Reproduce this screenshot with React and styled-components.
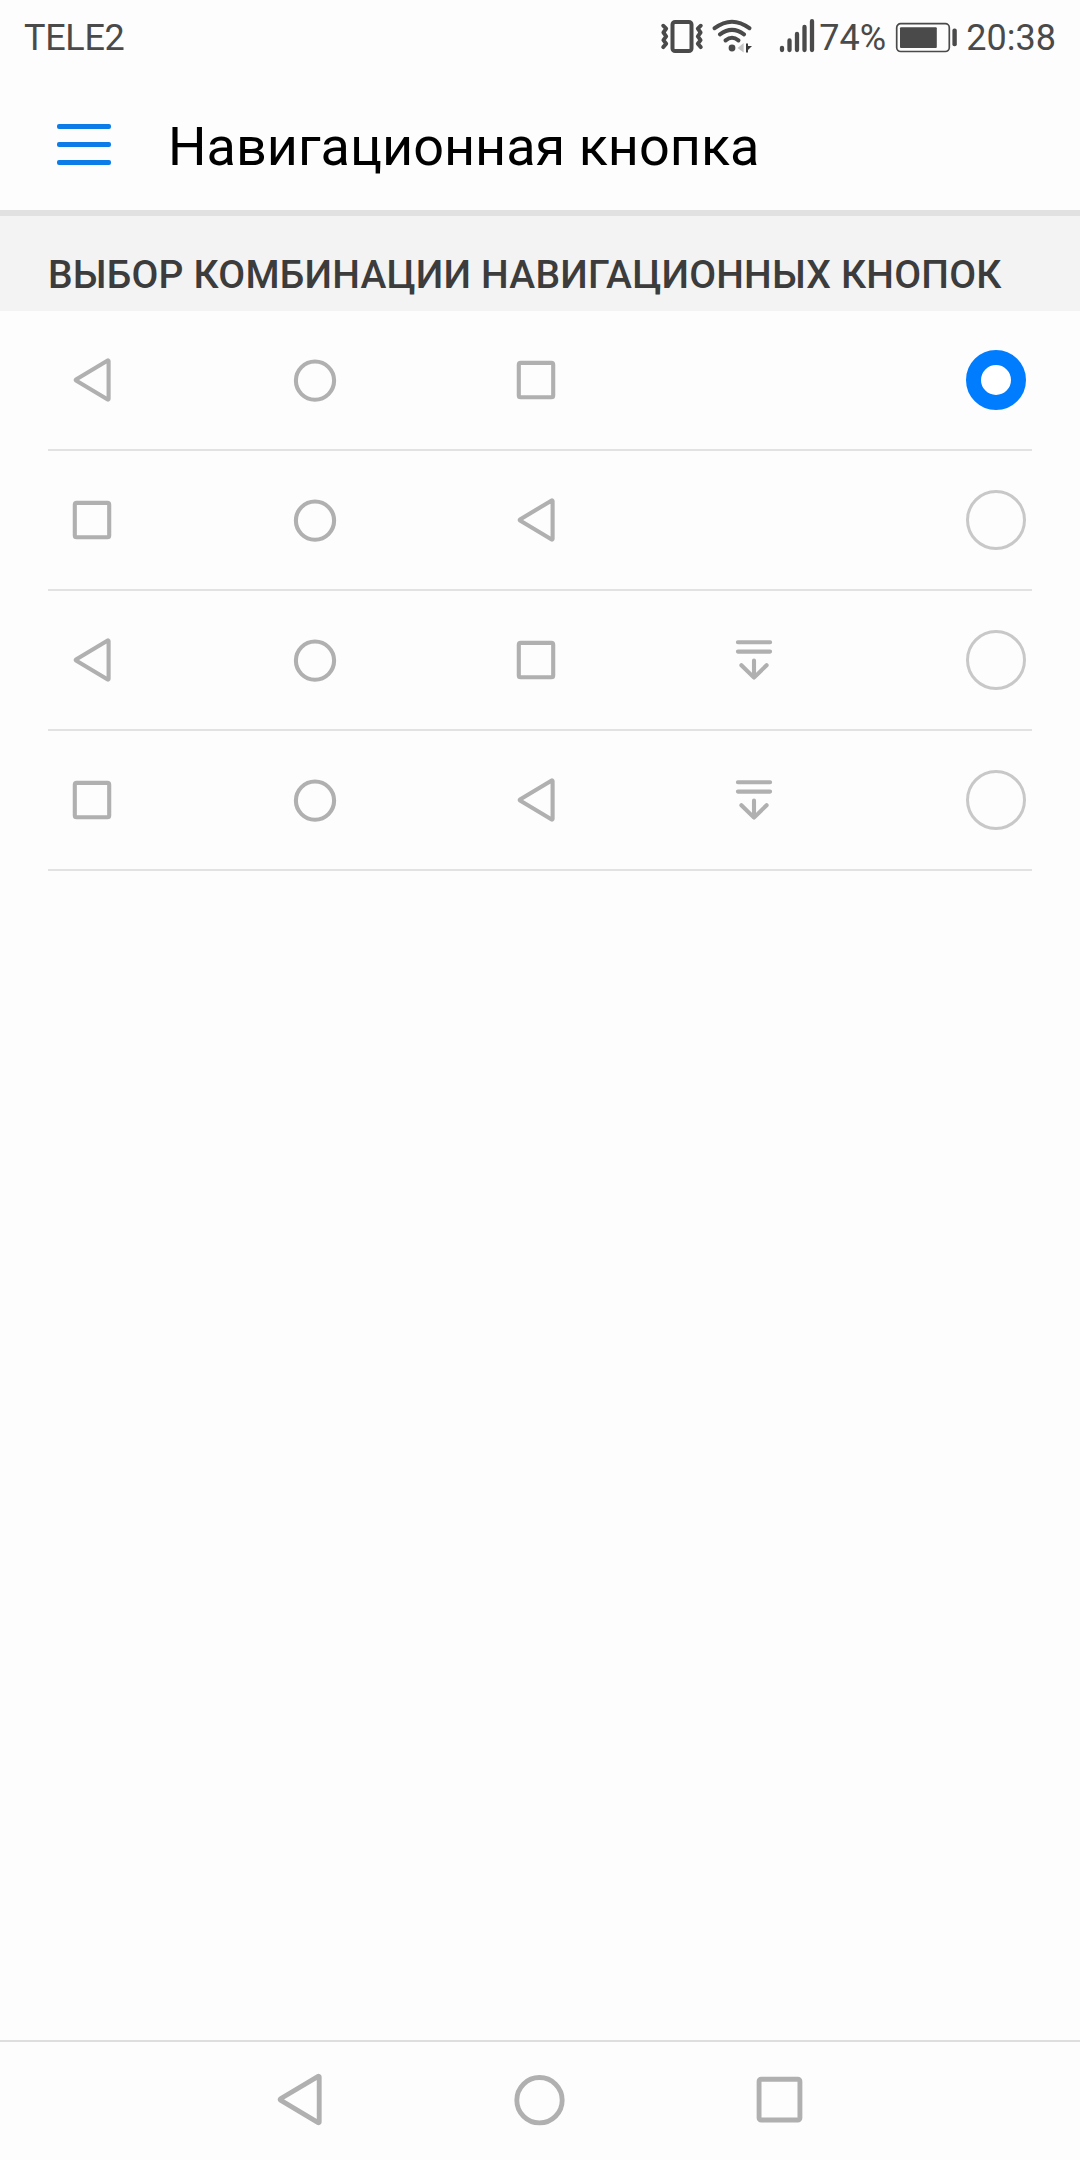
import React, { useState } from "react";
import styled, { createGlobalStyle } from "styled-components";

const combinations = [
  ["back", "home", "recent"],
  ["recent", "home", "back"],
  ["back", "home", "recent", "shade"],
  ["recent", "home", "back", "shade"],
];

const glyphs = {
  back: <path d="M40.6 5v38a.6.6 0 0 1-.9.5L8 24.6a.7.7 0 0 1 0-1.2L39.7 4.5a.6.6 0 0 1 .9.5Z" />,
  home: <circle cx="24" cy="24.6" r="19.1" />,
  recent: <rect x="6.8" y="6.9" width="34.4" height="34.4" rx="1.8" />,
  shade: (
    <path d="M7.9 6.2h32.2M7.9 15.6h32.2M24 24.5v17M11.4 29.2L24 41.6l12.6-12.4" />
  ),
};

function NavGlyph({ name, size = 48 }) {
  return (
    <GlyphSvg viewBox="0 0 48 48" $size={size}>
      {glyphs[name]}
    </GlyphSvg>
  );
}

function VibrateIcon() {
  return (
    <StatusSvg width="44" height="36" viewBox="0 0 44 36">
      <rect x="12.5" y="3.9" width="19" height="29.2" rx="2.6" strokeWidth="4" />
      <path
        d="M3.2 7.7l3 3-2.8 3.8 2.8 3.8-2.8 3.8 2.8 3.6-3 3.4M40.8 7.7l-3 3 2.8 3.8-2.8 3.8 2.8 3.8-2.8 3.6 3 3.4"
        strokeWidth="3.9"
      />
    </StatusSvg>
  );
}

function WifiIcon() {
  return (
    <StatusSvg width="40" height="36" viewBox="0 0 40 36">
      <path d="M2.6 10.2Q20 -2.8 37.4 10.2M8 16.3Q20 7.4 32 16.3M13.6 22.4Q20 17.2 26.4 22.4" strokeWidth="4" />
      <circle cx="20" cy="30" r="3.4" fill="#4a4a4a" stroke="none" />
      <path d="M25.6 30l6-5v9.4Z" fill="#c4c4c4" stroke="none" />
      <path d="M34 25.4h2v2.6h4l-4 4v2.6h-2Z" fill="#3a3a3a" stroke="none" />
    </StatusSvg>
  );
}

function SignalIcon() {
  return (
    <StatusSvg width="36" height="36" viewBox="0 0 36 36">
      <path d="M3 29.8v2.2M10.5 22.5v9.5M18 16v16M25.5 9v23M33 3.2v28.8" strokeWidth="4.3" />
    </StatusSvg>
  );
}

function BatteryIcon() {
  return (
    <StatusSvg width="62" height="36" viewBox="0 0 62 36">
      <rect x="1.7" y="5.7" width="52.6" height="27.8" rx="4" strokeWidth="1.7" />
      <rect x="5" y="9.2" width="36.8" height="20.8" rx="1" fill="#4a4a4a" stroke="none" />
      <rect x="57.4" y="10.6" width="4.4" height="17.6" rx="2" fill="#4a4a4a" stroke="none" />
    </StatusSvg>
  );
}

export default function App() {
  const [selected, setSelected] = useState(0);

  return (
    <>
      <GlobalStyle />
      <Screen>
        <StatusBar>
          <Carrier>TELE2</Carrier>
          <StatusIcons>
            <VibrateIcon />
            <WifiIcon />
            <SignalGroup>
              <SignalIcon />
              <Percent>74%</Percent>
            </SignalGroup>
            <BatteryIcon />
            <Clock>20:38</Clock>
          </StatusIcons>
        </StatusBar>

        <Header>
          <MenuButton aria-label="Меню">
            <span />
            <span />
            <span />
          </MenuButton>
          <Title>Навигационная кнопка</Title>
        </Header>

        <SectionTitle>ВЫБОР КОМБИНАЦИИ НАВИГАЦИОННЫХ КНОПОК</SectionTitle>

        <List>
          {combinations.map((keys, index) => (
            <Row key={index} onClick={() => setSelected(index)}>
              {keys.map((name) => (
                <NavGlyph key={name} name={name} />
              ))}
              <Radio $checked={selected === index} />
            </Row>
          ))}
        </List>

        <NavBar>
          <NavGlyph name="back" size={57} />
          <NavGlyph name="home" size={57} />
          <NavGlyph name="recent" size={57} />
        </NavBar>
      </Screen>
    </>
  );
}

const GlobalStyle = createGlobalStyle`
  * {
    box-sizing: border-box;
  }
  body {
    margin: 0;
    background: #fdfdfd;
    font-family: Roboto, "Noto Sans", sans-serif;
  }
`;

const Screen = styled.div`
  display: flex;
  flex-direction: column;
  width: 1080px;
  height: 2160px;
  background: #fdfdfd;
`;

const StatusBar = styled.div`
  display: flex;
  justify-content: space-between;
  height: 72px;
  padding: 0 24px;
  color: #4a4a4a;
  font-size: 36px;
  line-height: 72px;
`;

const Carrier = styled.div`
  padding-top: 2px;
  letter-spacing: -0.3px;
`;

const StatusIcons = styled.div`
  display: flex;
  align-items: center;
`;

const StatusSvg = styled.svg`
  display: block;
  flex: none;
  fill: none;
  stroke: #4a4a4a;
  stroke-linecap: round;
  stroke-linejoin: round;

  & + & {
    margin-left: 8px;
  }
`;

const SignalGroup = styled.div`
  display: flex;
  align-items: center;
  width: 116px;
  margin-left: 27px;
`;

const Percent = styled.span`
  padding: 4px 0 0 4px;
  font-size: 36px;
`;

const Clock = styled.span`
  padding: 3px 0 0 9px;
`;

const Header = styled.header`
  display: flex;
  align-items: center;
  height: 144px;
  padding: 6px 57px 0;
  border-bottom: 6px solid #e1e1e1;
`;

const MenuButton = styled.button`
  display: flex;
  flex-direction: column;
  gap: 13px;
  width: 54px;
  padding: 0;
  border: none;
  background: none;

  span {
    height: 5px;
    border-radius: 2px;
    background: #0b7ce8;
  }
`;

const Title = styled.h1`
  margin: 0;
  padding: 5px 0 0 57px;
  color: #000;
  font-size: 54px;
  font-weight: 400;
  white-space: nowrap;
`;

const SectionTitle = styled.h2`
  height: 95px;
  margin: 0;
  padding: 23px 48px 0;
  background: #f3f3f3;
  color: #3c3c3c;
  font-size: 39px;
  font-weight: 500;
  letter-spacing: 0.2px;
  line-height: 73px;
  white-space: nowrap;
`;

const List = styled.div`
  flex: 1;
  padding: 0 48px;
`;

const Row = styled.div`
  display: grid;
  grid-template-columns: 223px 221px 218px 1fr 60px;
  align-items: center;
  height: 140px;
  padding: 0 6px 0 20px;
  border-bottom: 2px solid #e2e2e2;
  cursor: pointer;
`;

const GlyphSvg = styled.svg`
  display: block;
  width: ${({ $size }) => $size}px;
  height: ${({ $size }) => $size}px;
  fill: none;
  stroke: #b0b0b0;
  stroke-width: 4.1;
  stroke-linecap: round;
  stroke-linejoin: round;
`;

const Radio = styled.span`
  grid-column: 5;
  width: 60px;
  height: 60px;
  border: ${({ $checked }) =>
    $checked ? "15px solid #007dff" : "3px solid #c8c8c8"};
  border-radius: 50%;
  background: ${({ $checked }) => ($checked ? "#fff" : "transparent")};
`;

const NavBar = styled.nav`
  display: flex;
  align-items: center;
  justify-content: center;
  gap: 183px;
  height: 120px;
  padding: 0 1px 3px 0;
  border-top: 2px solid #dedede;
`;
